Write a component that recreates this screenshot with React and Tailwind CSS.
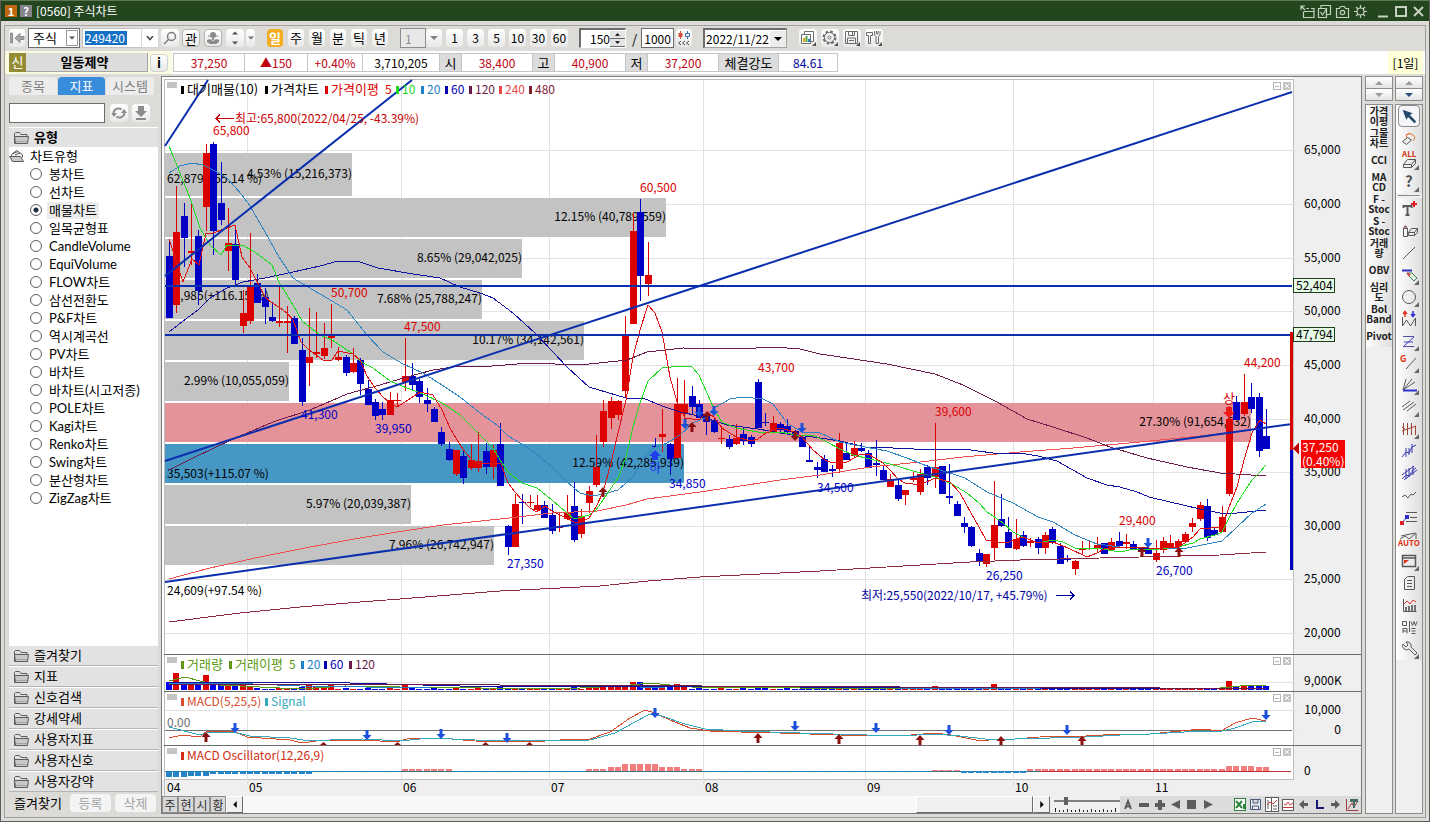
import React, { useState } from 'react';
import clsx from 'clsx';

const RED = '#dc0000';
const BLUE = '#0000c4';

// one row per day: [rising, high, low, body top, body bottom]
const CANDLES = [
    [0, 239, 318, 256, 318], [1, 186, 313, 232, 305], [0, 203, 267, 216, 238], [1, 201, 265, 251, 253], [0, 230, 305, 236, 291],
    [1, 144, 231, 153, 207], [0, 142, 255, 144, 231], [0, 162, 225, 203, 220], [1, 208, 271, 243, 251], [0, 227, 284, 244, 280],
    [1, 290, 333, 313, 326], [1, 233, 324, 286, 321], [0, 274, 303, 283, 303], [0, 288, 324, 297, 307], [0, 302, 322, 317, 321],
    [1, 286, 327, 321, 323], [1, 306, 353, 321, 323], [0, 316, 343, 318, 344], [0, 338, 406, 350, 402], [1, 308, 386, 357, 363],
    [1, 312, 358, 352, 354], [1, 323, 359, 348, 356], [1, 304, 348, 336, 338], [1, 347, 361, 357, 360], [0, 355, 376, 357, 373],
    [1, 348, 373, 363, 372], [0, 358, 395, 360, 384], [0, 380, 405, 389, 405], [0, 399, 420, 402, 416], [0, 402, 420, 409, 415],
    [1, 392, 415, 400, 415], [1, 393, 407, 400, 401], [1, 338, 391, 376, 382], [0, 363, 391, 376, 385], [0, 379, 403, 381, 397],
    [0, 388, 412, 400, 404], [0, 407, 422, 409, 422], [0, 427, 446, 432, 444], [0, 442, 461, 449, 460], [1, 450, 476, 450, 474],
    [0, 449, 484, 456, 478], [1, 444, 470, 460, 468], [1, 432, 472, 461, 468], [0, 443, 474, 451, 467], [1, 445, 479, 450, 467],
    [0, 423, 486, 444, 486], [0, 525, 555, 526, 547], [1, 494, 547, 504, 547], [0, 494, 524, 502, 503], [1, 495, 507, 502, 503],
    [1, 495, 512, 505, 510], [0, 501, 518, 505, 518], [0, 504, 534, 515, 531], [1, 513, 532, 527, 528], [1, 495, 520, 512, 519],
    [0, 482, 542, 506, 540], [1, 509, 538, 516, 534], [1, 486, 513, 491, 503], [1, 435, 487, 467, 485], [1, 400, 447, 411, 442],
    [1, 397, 429, 401, 418], [1, 400, 420, 401, 415], [1, 316, 398, 336, 391], [1, 213, 324, 231, 324], [0, 199, 301, 212, 276],
    [1, 242, 296, 275, 284], [0, 438, 447, 446, 447], [1, 409, 452, 434, 437], [0, 443, 475, 444, 459], [1, 378, 458, 404, 458],
    [1, 380, 420, 404, 414], [0, 386, 415, 396, 407], [0, 400, 418, 404, 418], [0, 412, 435, 414, 422], [0, 418, 433, 420, 432],
    [1, 427, 444, 438, 439], [0, 435, 449, 439, 447], [1, 424, 445, 438, 444], [0, 428, 445, 434, 441], [0, 435, 447, 437, 444],
    [0, 379, 428, 382, 428], [0, 413, 426, 422, 423], [1, 416, 432, 423, 432], [0, 422, 432, 424, 430], [0, 419, 435, 426, 432],
    [0, 430, 440, 431, 437], [0, 435, 447, 437, 447], [0, 446, 462, 460, 462], [0, 462, 478, 467, 470], [0, 455, 472, 459, 472],
    [0, 465, 477, 469, 471], [1, 433, 473, 443, 469], [0, 443, 460, 453, 460], [1, 441, 457, 448, 456], [0, 443, 452, 448, 451],
    [0, 450, 468, 453, 468], [0, 440, 476, 463, 465], [0, 465, 480, 470, 480], [1, 474, 487, 479, 487], [0, 480, 501, 485, 499],
    [1, 490, 505, 490, 495], [1, 472, 482, 478, 480], [1, 469, 495, 474, 492], [0, 465, 485, 467, 478], [1, 423, 488, 467, 477],
    [0, 466, 494, 466, 494], [0, 464, 504, 496, 498], [0, 501, 516, 504, 516], [0, 517, 533, 523, 527], [0, 526, 547, 527, 546],
    [0, 549, 566, 553, 562], [1, 554, 567, 554, 564], [1, 481, 560, 525, 548], [0, 494, 527, 519, 526], [0, 517, 548, 532, 548],
    [1, 519, 550, 539, 549], [0, 531, 547, 535, 546], [1, 538, 547, 541, 543], [0, 537, 554, 539, 548], [1, 532, 554, 535, 548],
    [0, 527, 544, 529, 543], [0, 543, 564, 546, 564], [0, 555, 562, 558, 560], [1, 560, 575, 561, 569], [1, 541, 554, 549, 550],
    [1, 541, 550, 548, 549], [1, 537, 553, 545, 548], [0, 543, 554, 543, 554], [1, 538, 550, 542, 550], [0, 532, 547, 541, 546],
    [1, 534, 549, 542, 544], [0, 541, 550, 544, 549], [0, 547, 557, 548, 552], [0, 546, 554, 548, 554], [1, 540, 562, 553, 560],
    [1, 537, 553, 541, 550], [1, 535, 548, 543, 547], [1, 539, 548, 541, 547], [1, 532, 543, 534, 542], [1, 518, 532, 523, 527],
    [1, 502, 521, 505, 519], [0, 499, 541, 506, 538], [0, 527, 536, 530, 535], [1, 506, 532, 517, 532], [1, 406, 496, 419, 494],
    [0, 396, 420, 402, 420], [1, 374, 416, 402, 414], [0, 383, 413, 397, 409], [0, 393, 457, 397, 451], [0, 409, 449, 436, 449],
];

const dayX = (i) => Math.round(169 + i * 7.362);

// bar heights of the volume pane, days that stand out
const VOLUMES = {
    0: 8, 1: 17, 2: 8, 3: 8, 4: 8, 5: 15, 6: 8, 7: 8, 8: 4, 9: 5, 10: 5, 11: 3, 18: 3, 19: 5, 20: 4, 21: 4, 22: 5, 32: 5,
    45: 3, 55: 3, 58: 4, 59: 5, 60: 4, 61: 3, 62: 5, 63: 8, 64: 8, 65: 5, 66: 4, 67: 5, 68: 3, 69: 6, 70: 5, 80: 4,
    91: 3, 104: 4, 112: 6, 144: 9, 145: 4, 146: 4, 147: 4, 148: 4, 149: 4,
};

const oscillator = (i) => {
    if (i < 6) return -6 + Math.floor(i / 3);
    if (i < 20) return -3;
    if (i < 32) return -1;
    if (i < 39) return 2;
    if (i < 57) return -1;
    if (i < 60) return 2;
    if (i < 62) return 4;
    if (i < 67) return 7;
    if (i < 70) return 4;
    if (i < 73) return 2;
    if (i < 104) return -1;
    if (i < 108) return 1;
    if (i < 117) return -2;
    if (i < 144) return 2;
    return i < 148 ? 5 : 4;
};

const AVERAGES = [
    { color: '#8c2c3c', points: '169,622 240,613 300,607 360,602 400,599 500,591 600,586 648,581 700,577 820,571 970,562 1020,560 1140,557 1220,555 1266,552' },
    { color: '#f05050', points: '169,579 210,568 260,557 310,547 360,538 410,530 443,525 500,519 552,513 597,511 626,505 647,499 700,492 747,485 780,480 820,475 870,467 920,462 963,457 1020,452 1073,448 1140,442 1200,436 1250,430' },
    { color: '#6e1c4c', points: '169,470 193,458 233,439 273,422 310,410 347,394 373,387 407,377 433,370 460,366 480,367 530,363 580,365 627,360 647,352 683,348 740,349 773,347 800,349 820,354 847,358 887,364 935,374 963,385 997,402 1027,419 1053,427 1087,438 1110,447 1147,458 1187,467 1220,473 1266,476' },
    { color: '#1212a0', points: '169,332 187,318 198,310 210,298 227,288 243,282 265,278 293,272 320,266 338,261 360,262 378,268 413,274 440,278 460,287 480,293 493,298 513,313 535,333 553,352 567,367 589,387 626,398 643,398 662,406 680,412 699,416 727,425 758,429 780,433 813,437 840,441 865,447 893,448 935,450 963,449 993,453 1020,453 1038,456 1057,461 1087,478 1107,485 1120,487 1137,492 1149,497 1170,502 1200,509 1220,513 1237,513 1266,510' },
    { color: '#2c84c4', points: '169,173 180,166 192,163 203,165 215,171 227,178 242,195 250,206 265,232 279,257 293,278 313,290 327,298 347,310 367,335 383,352 403,364 423,373 442,385 460,397 480,413 497,425 508,436 530,449 552,467 567,482 580,493 593,496 607,493 618,490 633,477 643,460 653,448 667,443 680,435 693,423 707,417 714,408 730,399 743,397 763,399 773,404 787,423 802,432 820,433 840,442 865,447 887,451 907,458 927,466 953,474 965,478 987,492 1013,503 1038,517 1053,522 1075,535 1097,544 1120,547 1149,548 1187,548 1222,541 1237,527 1252,513 1266,504' },
    { color: '#20dc20', points: '169,146 190,198 200,228 210,245 221,255 227,245 242,245 255,252 272,265 279,282 293,305 302,321 320,335 332,340 353,354 363,363 373,368 390,381 407,388 423,394 442,403 460,415 477,432 493,448 500,460 508,472 522,483 537,488 552,500 567,513 574,519 589,515 596,510 603,500 618,478 626,457 633,427 640,403 648,381 662,368 680,366 692,367 699,375 707,393 714,409 722,422 736,428 758,432 780,432 802,436 813,435 827,442 840,449 853,455 870,459 890,464 913,471 935,477 950,483 957,487 967,493 979,503 987,512 993,516 1003,523 1013,532 1023,537 1038,543 1053,540 1063,542 1075,548 1097,548 1120,552 1134,549 1149,550 1178,547 1193,543 1200,539 1215,535 1222,532 1229,518 1237,503 1252,480 1260,472 1266,465' },
    { color: '#e01010', points: '169,239 183,282 192,259 199,265 206,233 213,233 235,225 242,257 250,268 265,297 272,303 279,307 287,313 293,320 301,342 309,350 323,360 332,360 338,351 353,354 360,360 367,376 375,388 383,397 390,403 397,407 408,400 420,392 433,395 442,410 450,428 457,440 465,452 472,460 478,463 493,463 501,464 508,483 515,492 522,500 530,508 537,512 545,506 552,511 560,515 574,522 581,522 589,518 596,507 603,492 611,463 618,433 626,400 633,357 640,330 648,305 655,313 662,332 670,377 677,402 685,418 699,420 707,412 714,417 722,428 736,437 751,441 758,439 766,433 780,428 795,432 802,437 813,450 825,460 832,463 847,462 861,454 870,455 883,463 890,470 898,479 905,483 920,485 935,478 950,482 960,493 971,513 979,527 986,540 997,542 1009,542 1016,539 1023,537 1038,543 1053,542 1068,548 1087,557 1097,553 1104,549 1119,547 1134,547 1149,548 1163,548 1178,547 1185,543 1193,537 1200,529 1222,527 1229,507 1237,487 1244,460 1252,433 1260,420 1266,424' },
];

const PROFILE = [
    { y: 153, h: 43, to: 352, label: '4.53% (15,216,373)' },
    { y: 198, h: 39, to: 666, label: '12.15% (40,789,559)' },
    { y: 239, h: 39, to: 522, label: '8.65% (29,042,025)' },
    { y: 280, h: 39, to: 482, label: '7.68% (25,788,247)' },
    { y: 321, h: 39, to: 584, label: '10.17% (34,142,561)' },
    { y: 362, h: 39, to: 289, label: '2.99% (10,055,059)' },
    { y: 403, h: 39, to: 1251, label: '27.30% (91,654,632)', fill: '#e4939a' },
    { y: 444, h: 39, to: 684, label: '12.59% (42,285,939)', fill: '#4797c5' },
    { y: 485, h: 39, to: 411, label: '5.97% (20,039,387)' },
    { y: 526, h: 39, to: 494, label: '7.96% (26,742,947)' },
];

const MONTHS = [['04', 165], ['05', 247], ['06', 401], ['07', 549], ['08', 703], ['09', 865], ['10', 1013], ['11', 1153]];
const PRICES = [['65,000', 150], ['60,000', 204], ['55,000', 258], ['50,000', 311], ['45,000', 365], ['40,000', 419], ['35,000', 472], ['30,000', 526], ['25,000', 579], ['20,000', 633]];

const PRICE_TAGS = [
    ['65,800', 213, 135, RED], ['50,700', 331, 297, RED], ['47,500', 404, 331, RED], ['60,500', 640, 192, RED],
    ['43,700', 758, 372, RED], ['39,600', 935, 416, RED], ['29,400', 1119, 525, RED], ['44,200', 1244, 367, RED],
    ['41,300', 301, 419, BLUE], ['39,950', 375, 433, BLUE], ['27,350', 507, 568, BLUE], ['34,850', 669, 488, BLUE],
    ['34,500', 817, 492, BLUE], ['26,250', 986, 580, BLUE], ['26,700', 1156, 575, BLUE],
];

const SIDE_NOTES = [['62,879(+55.14 %)', 183], ['51,985(+116.15 %)', 300], ['35,503(+115.07 %)', 478], ['24,609(+97.54 %)', 595]];

function Legend({ y, items }) {
    return items.map(([text, x, color, marked = true]) => (
        <g key={text + x} fill={color}>
            {marked && <rect x={x - 6} y={y - 8} width="3" height="8" />}
            <text x={x} y={y} fontSize={/[가-힣]/.test(text) ? 13 : 12}>{text}</text>
        </g>
    ));
}

function PaneButtons({ y }) {
    return (
        <g fill="none" stroke="#b4b4b4">
            <rect x="167" y={y} width="10" height="6" fill="#c4c4c4" stroke="none" />
            <rect x="1273.5" y={y + 0.5} width="7" height="7" />
            <path d={`M1275 ${y + 4.5}h4`} />
            <rect x="1283" y={y} width="8" height="8" fill="#c4c4c4" stroke="none" />
            <path d={`M1285 ${y + 2}l4 4m0-4l-4 4`} stroke="#fff" />
        </g>
    );
}

function DownArrow({ x, y, color = '#1c50dc' }) {
    return <path d={`M${x - 1.5} ${y - 5}h3v5h3l-4.500 5l-4.500-5h3z`} fill={color} />;
}

function UpArrow({ x, y, color = '#8c1010' }) {
    return <path d={`M${x - 1.5} ${y + 5}h3v-5h3l-4.500-5l-4.500 5h3z`} fill={color} />;
}

function PricePane() {
    return (
        <g>
            {PROFILE.map((b) => (
                <rect key={b.y} x="165" y={b.y} width={b.to - 165} height={b.h} fill={b.fill || '#c3c3c3'} />
            ))}
            <g fontSize="12" fill="#000">
                {PROFILE.map((b) => <text key={b.y} x={b.to} y={b.y === 153 ? 178 : b.y + 23} textAnchor="end">{b.label}</text>)}
                {SIDE_NOTES.map(([text, y]) => <text key={text} x="167" y={y}>{text}</text>)}
            </g>
            {CANDLES.map(([up, high, low, top, bottom], i) => (
                <g key={i} fill={up ? RED : BLUE}>
                    <rect x={dayX(i)} y={high} width="1" height={low - high} />
                    <rect x={dayX(i) - 3} y={top} width="7" height={Math.max(bottom - top, 1)} />
                </g>
            ))}
            {AVERAGES.map((a) => <polyline key={a.color} points={a.points} fill="none" stroke={a.color} />)}
            <g stroke="#0a2fae" strokeWidth="2" shapeRendering="auto">
                <path d="M165 146L208 80M165 276L412 80M165 286H1292M165 335H1292M165 461L1292 92M165 582L1292 424" />
            </g>
            <g shapeRendering="auto">
                <UpArrow x={603} y={492} />
                <UpArrow x={692} y={427} />
                <UpArrow x={707} y={416} />
                <UpArrow x={1142} y={552} />
                <UpArrow x={1179} y={552} />
                <DownArrow x={685} y={424} />
                <DownArrow x={699} y={412} />
                <DownArrow x={714} y={411} />
                <DownArrow x={802} y={428} />
                <DownArrow x={795} y={436} color="#8c1010" />
                <DownArrow x={1148} y={543} />
                <path d="M655 450l6 6h-3v4h-6v-4h-3z" fill="#2040f0" />
                <path d="M1229 418l6-6h-3v-5h-6v5h-3z" fill="#f01818" />
            </g>
            <text x="649" y="472" fontSize="13" fill="#2040f0">하</text>
            <text x="1223" y="403" fontSize="13" fill={RED}>상</text>
            <g fontSize="12">
                {PRICE_TAGS.map(([text, x, y, color]) => <text key={text} x={x} y={y} fill={color}>{text}</text>)}
            </g>
            <text x="235" y="123" fontSize="12" fill="#c80000">최고:65,800(2022/04/25, -43.39%)</text>
            <path d="M234 118.500h-18m4-4l-4 4l4 4" fill="none" stroke="#c80000" />
            <text x="861" y="600" fontSize="12" fill="#0000a0">최저:25,550(2022/10/17, +45.79%)</text>
            <path d="M1056 595.500h18m-4-4l4 4l-4 4" fill="none" stroke="#0000a0" />
            <Legend
                y={94}
                items={[
                    ['대기매물(10)', 187, '#000'], ['가격차트', 271, '#000'], ['가격이평', 331, RED], ['5', 385, RED, false],
                    ['10', 402, '#20d820'], ['20', 427, '#2080c8'], ['60', 451, '#0000b0'], ['120', 475, '#6a1a48'],
                    ['240', 505, '#e84848'], ['480', 535, '#802030'],
                ]}
            />
            <PaneButtons y={82} />
        </g>
    );
}

function VolumePane() {
    return (
        <g>
            {CANDLES.map(([up], i) => {
                const h = VOLUMES[i] || 1 + ((i * 7) % 3 === 0);
                return <rect key={i} x={dayX(i) - 3} y={690 - h} width="6" height={h} fill={up ? RED : '#0000f0'} />;
            })}
            <g fill="none">
                <path d="M169 681L185 677L200 681L220 685L300 689L345 686L400 687L560 689L620 686L650 683L690 687L800 688L1220 688L1250 685L1266 686" stroke="#5a9a10" />
                <path d="M169 683L230 683L300 686L430 688L640 688L690 686L800 687L1000 689L1266 688" stroke="#2080c8" />
                <path d="M169 682L350 683L460 686L800 687L1040 688L1266 688" stroke="#1010a0" />
                <path d="M169 684L500 685L900 687L1160 688L1266 688" stroke="#6a1a48" />
            </g>
            <Legend
                y={669}
                items={[
                    ['거래량', 187, '#5a9a10'], ['거래이평', 235, '#5a9a10'], ['5', 289, '#5a9a10', false],
                    ['20', 307, '#2080c8'], ['60', 330, '#0000b0'], ['120', 355, '#6a1a48'],
                ]}
            />
            <PaneButtons y={657} />
        </g>
    );
}

function MacdPane() {
    const sells = [[235, 728], [367, 735], [441, 734], [507, 738], [655, 713], [795, 726], [876, 728], [949, 730], [1067, 730], [1266, 715]];
    const buys = [[206, 737], [758, 738], [839, 739], [920, 740], [1001, 741], [1082, 741]];
    return (
        <g>
            <path d="M165 730.500H1292" stroke="#707070" />
            <polyline points="169,738 182,735 200,737 207,731 233,731 247,737 290,740 302,743 323,740 363,740 397,742 410,738 440,738 475,741 530,742 560,740 590,739 610,732 630,718 645,710 655,713 670,720 690,728 710,731 740,732 780,733 840,735 900,736 934,733 951,735 981,741 998,739 1015,739 1052,736 1086,736 1120,734 1150,734 1201,729 1221,731 1235,723 1252,718 1266,721" fill="none" stroke="#d84c2c" />
            <polyline points="169,727 200,735 210,732 233,732 250,736 290,738 310,741 330,740 363,739 400,741 430,738 475,740 530,741 590,740 615,733 635,722 650,714 662,716 685,724 705,729 740,731 800,733 900,736 934,734 960,736 985,739 1015,739 1086,737 1120,735 1150,734 1201,731 1222,731 1235,728 1255,721 1266,721" fill="none" stroke="#34a8bc" />
            <g shapeRendering="auto">
                {sells.map(([x, y]) => <DownArrow key={x} x={x} y={y} />)}
                {buys.map(([x, y]) => <UpArrow key={x} x={x} y={y} />)}
                <path d="M320 745l3.500-3l3.500 3zM394 745l3.500-3l3.500 3zM482 745l3.500-3l3.500 3zM526 745l3.500-3l3.500 3z" fill="#8c1010" />
            </g>
            <Legend y={706} items={[['MACD(5,25,5)', 187, '#d84c2c'], ['Signal', 271, '#34a8bc']]} />
            <text x="167" y="727" fontSize="12" fill="#707070">0.00</text>
            <PaneButtons y={694} />
        </g>
    );
}

function OscillatorPane() {
    return (
        <g>
            <path d="M165 771.500H1266" stroke="#3c7484" />
            <path d="M1040 771.500H1291" stroke="#c03030" />
            {CANDLES.map((_, i) => {
                const v = oscillator(i);
                return (
                    <rect key={i} x={dayX(i) - 3} y={v > 0 ? 771 - v : 771} width="6" height={Math.abs(v)} fill={v > 0 ? '#f47c7c' : '#2484c8'} />
                );
            })}
            <Legend y={760} items={[['MACD Oscillator(12,26,9)', 187, '#d02c10']]} />
            <PaneButtons y={748} />
        </g>
    );
}

function Axis() {
    return (
        <g fontSize="12" fill="#000">
            {PRICES.map(([text, y]) => <text key={text} x="1304" y={y + 4}>{text}</text>)}
            {MONTHS.map(([text, x]) => <text key={text} x={x + 2} y="792">{text}</text>)}
            <text x="1304" y="685">9,000K</text>
            <text x="1341" y="714" textAnchor="end">10,000</text>
            <text x="1341" y="734" textAnchor="end">0</text>
            <text x="1304" y="775">0</text>
            {[['52,404', 286], ['47,794', 335]].map(([text, y]) => (
                <g key={text}>
                    <rect x="1293.500" y={y - 7.5} width="41" height="14" fill="#e6fae6" stroke="#1c3c1c" />
                    <text x="1296" y={y + 4}>{text}</text>
                </g>
            ))}
            <rect x="1290" y="332" width="3" height="118" fill={RED} />
            <rect x="1290" y="450" width="3" height="120" fill={BLUE} />
            <path d="M1299 443v11l-6-5.500z" fill="#c00000" />
            <rect x="1301" y="440" width="44" height="28" fill="#f80000" />
            <text x="1302" y="452" fill="#fff">37,250</text>
            <text x="1302" y="466" fill="#fff">(0.40%)</text>
        </g>
    );
}

function StockChart() {
    return (
        <svg viewBox="162 77 1199 719" className="block h-auto w-full" shapeRendering="crispEdges" role="img" aria-label="일동제약 주식차트">
            <rect x="162" y="77" width="1199" height="719" fill="#efefef" />
            <rect x="162" y="77" width="1131" height="703" fill="#fff" />
            <path d="M164.500 796V79.500H1293.500V779.500H164.500" fill="none" stroke="#bcbcbc" />
            <g stroke="#e2e2e2">
                {PRICES.map(([text, y]) => <path key={text} d={`M165 ${y}.500H1297`} />)}
                {MONTHS.slice(1).map(([text, x]) => <path key={text} d={`M${x}.500 80V786`} />)}
                <path d="M165 682.500H1297M165 710.500H1297M1293 730.500h4M1293 771.500h4" />
            </g>
            <PricePane />
            <VolumePane />
            <MacdPane />
            <OscillatorPane />
            <path d="M164 654.500H1361M164 691.500H1361M164 745.500H1361" stroke="#6c6c6c" />
            <Axis />
        </svg>
    );
}

function TitleBar() {
    return (
        <header className="flex h-[21px] items-center border-t border-[#5c7854] bg-[#24461e] px-1 text-[13px] text-white">
            <span className="h-3 w-3 bg-[#c06810] text-center text-[11px] leading-3 font-bold">1</span>
            <span className="ml-[3px] h-3 w-3 bg-[#84848c] text-center text-[11px] leading-3 font-bold">?</span>
            <h1 className="ml-1 flex-1 text-[12px]">[0560] 주식차트</h1>
            <svg viewBox="0 0 126 16" className="h-4 w-[126px]" fill="none" stroke="#c4d0c0" strokeWidth="1.200">
                <path d="M2 7V3h4M2 3l4 4M8 5.500h2M12 5.500h3v9H4.500V9M4.500 14.500v-6M8 5v1M5 8.500h10" />
                <path d="M19.500 5.500h8v9h-8zM22 5V2.500h9.500v9H28M21.500 9l2 3l4-6" />
                <path d="M37.500 5.500h3l1-2h4l1 2h3v9h-12z" />
                <circle cx="43.500" cy="9.500" r="2.200" />
                <circle cx="61.500" cy="8.500" r="3.500" />
                <path d="M61.500 2v3M61.500 12v3M55 8.500h3M65 8.500h3M57 4l2 2M66 4l-2 2M57 13l2-2M66 13l-2-2" />
                <path d="M79 13.500h10" strokeWidth="2" />
                <path d="M97 4h10v9H97z" strokeWidth="2" />
                <path d="M115 4l9 9m0-9l-9 9" strokeWidth="2" />
            </svg>
        </header>
    );
}

function ToolButton({ children, label, className }) {
    return (
        <button
            type="button"
            aria-label={label}
            className={clsx('flex h-[18px] shrink-0 items-center justify-center rounded-sm bg-gradient-to-b from-white to-[#e8e8e8]', className)}
        >
            {children}
        </button>
    );
}

function Triangle({ down, className }) {
    return (
        <svg viewBox="0 0 8 4" className={clsx('h-1 w-2', className)} fill="currentColor">
            <path d={down ? 'M0 0h8l-4 4z' : 'M0 4h8l-4-4z'} />
        </svg>
    );
}

function Toolbar() {
    const [period, setPeriod] = useState('일');
    return (
        <div className="flex h-[25px] items-center pb-px pl-1 text-[13px] text-black">
            <ToolButton label="처음" className="w-4">
                <svg viewBox="0 0 16 16" className="h-4 w-4" fill="#a4a4a4" stroke="#8c8c8c">
                    <path d="M1.500 3v10h2V3zM15 6.500h-4V3.500l-5 4.500l5 4.500v-3h4z" />
                </svg>
            </ToolButton>
            <div className="relative ml-[3px] w-[52px]">
                <select aria-label="종목구분" defaultValue="주식" className="h-5 w-full appearance-none border border-[#6c6c6c] bg-white pl-1 leading-4 outline-none">
                    <option>주식</option>
                </select>
                <span className="pointer-events-none absolute top-[2px] right-[2px] flex h-4 w-3 items-center justify-center border border-[#9c9c9c] text-[#505050]"><Triangle down className="w-[6px]" /></span>
            </div>
            <div className="ml-[2px] flex h-5 w-[59px] items-center border border-r-0 border-[#c4c4c4] bg-white pl-[2px]">
                <input aria-label="종목코드" defaultValue="249420" className="h-[14px] w-[42px] bg-[#1470c4] text-[12px] leading-[14px] text-white outline-none" />
            </div>
            <button type="button" aria-label="종목목록" className="flex h-5 w-[18px] items-center justify-center border border-[#d4d4d4] bg-white">
                <svg viewBox="0 0 8 5" className="h-[5px] w-2" fill="none" stroke="#484848" strokeWidth="1.500"><path d="M1 0l3 3.500l3-3.500" /></svg>
            </button>
            <ToolButton label="검색" className="ml-[2px] w-[18px]">
                <svg viewBox="0 0 14 14" className="h-[14px] w-[14px]" fill="none" stroke="#7c7c7c" strokeWidth="1.500"><circle cx="8.500" cy="5.500" r="4" /><path d="M5.500 8.500L1 13" /></svg>
            </ToolButton>
            <ToolButton className="ml-[3px] w-[18px] border border-[#b4b4b4]">관</ToolButton>
            <ToolButton label="투자자" className="ml-1 w-[18px] border border-[#b4b4b4]">
                <svg viewBox="0 0 14 14" className="h-[14px] w-[14px]" fill="#8c8c8c">
                    <circle cx="7" cy="4" r="3" />
                    <path d="M2 4.500h10v1H2zM6 7h2v2H6zM1 9l3-1l3 2l3-2l3 1v2l-3 2H4l-3-2z" />
                </svg>
            </ToolButton>
            <ToolButton label="이동" className="ml-1 w-[18px] flex-col gap-[6px] text-[#505050]">
                <Triangle className="w-[6px]" /><Triangle down className="w-[6px]" />
            </ToolButton>
            <ToolButton label="이동 목록" className="ml-[2px] w-[9px] text-[#707070]"><Triangle down className="w-[6px]" /></ToolButton>
            <div className="ml-3 flex gap-[5px]">
                {['일', '주', '월', '분', '틱', '년'].map((p) => (
                    <button
                        key={p}
                        type="button"
                        onClick={() => setPeriod(p)}
                        className={clsx('h-[18px] w-4 rounded-sm leading-[18px]', p === period ? 'bg-[#f4ac20] font-bold text-white' : 'bg-gradient-to-b from-white to-[#e8e8e8]')}
                    >
                        {p}
                    </button>
                ))}
            </div>
            <input aria-label="분 단위" defaultValue="1" disabled className="ml-3 h-5 w-[26px] border border-[#8c8c8c] bg-[#e8e8e8] pl-1 text-[12px] text-[#8c8c8c]" />
            <ToolButton label="분 단위 목록" className="w-4 text-[#808080]"><Triangle down /></ToolButton>
            <div className="ml-1 flex gap-1 text-[12px]">
                {['1', '3', '5', '10', '30', '60'].map((n) => <ToolButton key={n} className="w-[17px]">{n}</ToolButton>)}
            </div>
            <div className="ml-[11px] flex h-5 items-center border-2 border-r border-b border-[#6c6c6c] border-r-white border-b-white bg-white">
                <input aria-label="표시 봉수" defaultValue="150" className="w-[29px] text-right text-[12px] outline-none" />
                <span className="flex w-[15px] flex-col text-black">
                    <button type="button" aria-label="늘림" className="flex h-2 items-center justify-center border-b border-[#6c6c6c] bg-[#e4e4e4]"><Triangle className="h-[3px] w-[5px]" /></button>
                    <button type="button" aria-label="줄임" className="flex h-2 items-center justify-center border-b border-[#6c6c6c] bg-[#e4e4e4]"><Triangle down className="h-[3px] w-[5px]" /></button>
                </span>
            </div>
            <span className="ml-[6px]">/</span>
            <input aria-label="전체 봉수" defaultValue="1000" className="ml-1 h-5 w-[33px] border border-[#6c6c6c] bg-white text-center text-[12px]" />
            <ToolButton label="봉 조회" className="ml-[2px] w-4">
                <svg viewBox="0 0 16 16" className="h-4 w-4" fill="none" stroke="#3c6cb4">
                    <path d="M4.500 1v8" stroke="#d84c3c" /><path d="M2.500 3h4v4h-4z" fill="#d84c3c" stroke="none" />
                    <path d="M11.500 1v2M11.500 7v2M9.500 3.500h4v3h-4z" />
                    <path d="M5 11l-2.500 2l2.500 2M9 11l-2.500 2L9 15M13 11l-2.500 2l2.500 2" stroke="#484848" />
                </svg>
            </ToolButton>
            <div className="ml-[11px] flex h-5 w-[84px] items-center border-2 border-r border-b border-[#6c6c6c] border-r-[#a4a4a4] border-b-[#a4a4a4] bg-white">
                <input aria-label="일자" defaultValue="2022/11/22" className="w-0 flex-1 pl-px text-[12px] outline-none" />
                <button type="button" aria-label="달력" className="flex h-4 w-4 items-center justify-center bg-[#ececec] text-black"><Triangle down /></button>
            </div>
            <div className="ml-3 flex gap-1">
                <ToolButton label="차트 추가" className="w-[18px]">
                    <svg viewBox="0 0 18 18" className="h-[18px] w-[18px]" fill="none" stroke="#6c6c6c"><path d="M5.500 5V2.500h9v10H12M2.500 5.500h9v9h-9z" fill="#fff" /><path d="M5 13V9" stroke="#e4a410" strokeWidth="2" /><path d="M7.500 13V7" stroke="#4ca444" strokeWidth="2" /><path d="M10 13v-3" stroke="#2c7cc4" strokeWidth="2" /><path d="M17 13v4h-4z" fill="#505050" stroke="none" /></svg>
                </ToolButton>
                <ToolButton label="설정" className="w-[18px]">
                    <svg viewBox="0 0 18 18" className="h-[18px] w-[18px]" fill="none" stroke="#6c6c6c"><circle cx="8.500" cy="8.500" r="6" strokeWidth="2" strokeDasharray="2.700 2" /><circle cx="8.500" cy="8.500" r="5" /><circle cx="8.500" cy="8.500" r="1.500" /><path d="M17 13v4h-4z" fill="#505050" stroke="none" /></svg>
                </ToolButton>
                <ToolButton label="저장" className="w-[18px]">
                    <svg viewBox="0 0 18 18" className="h-[18px] w-[18px]" fill="none" stroke="#6c6c6c"><path d="M2.500 2.500h12v12h-12zM5.500 2.500v4h6v-4M9.500 3v3M4.500 14v-5h8v5M6 11.500h5" /><path d="M17 13v4h-4z" fill="#505050" stroke="none" /></svg>
                </ToolButton>
                <ToolButton label="도구" className="w-[18px]">
                    <svg viewBox="0 0 18 18" className="h-[18px] w-[18px]" fill="none" stroke="#6c6c6c"><path d="M1.500 3.500h6v3h-2v8h-2v-8h-2zM9.500 2v4l1.500 1.500v7h2.500v-7L15 6V2M11.500 2v3h1.500V2" /><path d="M17 13v4h-4z" fill="#505050" stroke="none" /></svg>
                </ToolButton>
            </div>
        </div>
    );
}

function QuoteBar() {
    const cell = 'border-r border-[#c4c4c4] p-0 text-center font-normal';
    return (
        <div className="flex h-[23px] items-center bg-white pr-[2px]">
            <div className="flex h-full items-center bg-[#fbfbe4] pr-1 pl-1">
                <div className="flex h-[19px] w-[139px] text-[13px]">
                    <span className="w-[17px] bg-[#948c34] text-center leading-[18px] text-white">신</span>
                    <button type="button" className="flex-1 border-r border-b border-[#a4a4a4] bg-[#dcdcdc] pr-1 font-bold leading-[18px]">일동제약</button>
                </div>
                <ToolButton label="종목정보" className="ml-[2px] w-[18px] border border-[#d0d0d0] text-[13px] font-bold">i</ToolButton>
            </div>
            <table className="ml-px h-[19px] table-fixed border-collapse border border-[#c4c4c4] text-[12px]">
                <tbody>
                    <tr>
                        <td className={clsx(cell, 'w-[71px] text-[#c00010]')}>37,250</td>
                        <td className={clsx(cell, 'w-[63px] text-[#c00010]')}>▲150</td>
                        <td className={clsx(cell, 'w-[55px] text-[#c00010]')}>+0.40%</td>
                        <td className={clsx(cell, 'w-[77px]')}>3,710,205</td>
                        <th className={clsx(cell, 'w-[22px] bg-[#dcdcdc] text-[13px]')}>시</th>
                        <td className={clsx(cell, 'w-[71px] text-[#c00010]')}>38,400</td>
                        <th className={clsx(cell, 'w-[22px] bg-[#dcdcdc] text-[13px]')}>고</th>
                        <td className={clsx(cell, 'w-[71px] text-[#c00010]')}>40,900</td>
                        <th className={clsx(cell, 'w-[22px] bg-[#dcdcdc] text-[13px]')}>저</th>
                        <td className={clsx(cell, 'w-[71px] text-[#c00010]')}>37,200</td>
                        <th className={clsx(cell, 'w-[60px] bg-[#dcdcdc] text-[13px]')}>체결강도</th>
                        <td className={clsx(cell, 'w-[59px] text-[#0000a0]')}>84.61</td>
                    </tr>
                </tbody>
            </table>
            <span className="ml-auto flex h-full w-[35px] items-center justify-center bg-[#ffffd8] text-[12px]">[1일]</span>
        </div>
    );
}

function FolderIcon({ open }) {
    return (
        <svg viewBox="0 0 16 14" className="h-[14px] w-4 shrink-0" stroke="#5c5c5c" fill="#c8c8c8">
            {open ? (
                <>
                    <path d="M2.500 11.500v-6l5-4l6 4v3" fill="#f0f0f0" />
                    <path d="M4 4.500l5-2M6 6l5-2" fill="none" />
                    <path d="M0.500 7.500h11l3 5h-11z" />
                </>
            ) : (
                <>
                    <path d="M1.500 12.500v-10l1-1h4l1.500 2h6v9z" fill="#e0e0e0" />
                    <path d="M2.500 12.500l-1-7h14l-1 7z" />
                    <path d="M3 10.500h11" stroke="#a4a4a4" />
                </>
            )}
        </svg>
    );
}

const CHART_TYPES = [
    '봉차트', '선차트', '매물차트', '일목균형표', 'CandleVolume', 'EquiVolume', 'FLOW차트', '삼선전환도', 'P&F차트', '역시계곡선',
    'PV차트', '바차트', '바차트(시고저종)', 'POLE차트', 'Kagi차트', 'Renko차트', 'Swing차트', '분산형차트', 'ZigZag차트',
];
const FOLDERS = ['즐겨찾기', '지표', '신호검색', '강세약세', '사용자지표', '사용자신호', '사용자강약'];

function Sidebar() {
    const [chartType, setChartType] = useState('매물차트');
    return (
        <aside className="flex w-[149px] shrink-0 flex-col font-['Lato','Noto_Sans_CJK_KR',sans-serif] text-[13px] text-black">
            <nav className="mt-px flex h-[18px] gap-px text-[#808080]">
                <button type="button" className="w-12 rounded-t-sm bg-[#ececec] leading-[18px]">종목</button>
                <button type="button" className="w-[47px] rounded-t-sm bg-[#388cdc] leading-[18px] text-white">지표</button>
                <button type="button" className="w-12 rounded-t-sm bg-[#ececec] leading-[18px]">시스템</button>
            </nav>
            <div className="mt-2 flex items-center">
                <input aria-label="지표 찾기" className="h-5 w-24 border border-[#6c6c6c] bg-white px-1 outline-none" />
                <ToolButton label="새로고침" className="ml-[5px] w-[18px]">
                    <svg viewBox="0 0 16 16" className="h-4 w-4" fill="none" stroke="#8c8c8c" strokeWidth="2"><path d="M2.500 8a5 5 0 0 1 8-3.500M13.500 8a5 5 0 0 1-8 3.500" /><path d="M10 8h6l-3-4zM6 8H0l3 4z" fill="#8c8c8c" stroke="none" /></svg>
                </ToolButton>
                <ToolButton label="내려받기" className="ml-1 w-[18px]">
                    <svg viewBox="0 0 16 16" className="h-4 w-4" fill="#8c8c8c"><path d="M5 1h6v5h3l-6 6l-6-6h3zM3 13h10v2H3z" /></svg>
                </ToolButton>
            </div>
            <h2 className="mt-1 flex h-5 items-center gap-[5px] border-t border-white bg-[#e2e2e2] pl-1 font-bold">
                <FolderIcon />유형
            </h2>
            <div className="flex-1 bg-white">
                <div className="flex h-[18px] items-center gap-[5px]"><FolderIcon open />차트유형</div>
                {CHART_TYPES.map((name) => (
                    <label key={name} className="flex h-[18px] items-center pl-[21px]">
                        <input
                            type="radio"
                            name="chartType"
                            checked={chartType === name}
                            onChange={() => setChartType(name)}
                            className="h-3 w-3 shrink-0 appearance-none rounded-full border border-[#5c5c5c] bg-white checked:bg-[radial-gradient(#203040_2px,#fff_3px)]"
                        />
                        <span className={clsx('ml-[5px] px-[2px] leading-[17px] whitespace-nowrap', chartType === name && 'bg-[#ececec]')}>{name}</span>
                    </label>
                ))}
            </div>
            {FOLDERS.map((name) => (
                <button key={name} type="button" className="flex h-[21px] items-center gap-[5px] border-t border-b border-t-white border-b-[#b4b4b4] bg-[#e2e2e2] pl-1">
                    <FolderIcon />{name}
                </button>
            ))}
            <div className="flex h-[22px] items-center">
                <span className="pl-[5px]">즐겨찾기</span>
                <button type="button" className="ml-auto h-[18px] w-[41px] rounded-sm bg-[#f4f4f4] leading-[18px] text-[#a4a4a4]">등록</button>
                <button type="button" className="mr-[2px] ml-1 h-[18px] w-[41px] rounded-sm bg-[#f4f4f4] leading-[18px] text-[#a4a4a4]">삭제</button>
            </div>
        </aside>
    );
}

function BottomBar() {
    const gray = '#5c5c5c';
    return (
        <div className="flex h-[17px] bg-[#f0f0f0] text-[12px]">
            {['주', '현', '시', '황'].map((t) => (
                <button key={t} type="button" className="w-4 border border-[#8c8c8c] bg-[#d8d8d8] leading-[14px] text-[#303030]">{t}</button>
            ))}
            <button type="button" aria-label="왼쪽" className="flex w-[17px] items-center justify-center border border-r-[#6c6c6c] border-b-[#6c6c6c] border-t-white border-l-white">
                <svg viewBox="0 0 4 8" className="h-[7px] w-[4px]"><path d="M4 0v8L0 4z" /></svg>
            </button>
            <div className="flex flex-1 justify-end bg-[#f8f8f8]">
                <button type="button" aria-label="스크롤" className="w-[117px] border border-r-[#6c6c6c] border-b-[#6c6c6c] border-t-white border-l-white bg-[#f0f0f0]" />
            </div>
            <button type="button" aria-label="오른쪽" className="flex w-[17px] items-center justify-center border border-r-[#6c6c6c] border-b-[#6c6c6c] border-t-white border-l-white">
                <svg viewBox="0 0 4 8" className="h-[7px] w-[4px]"><path d="M0 0v8l4-4z" /></svg>
            </button>
            <div className="ml-1 flex w-[66px] flex-col justify-between pt-[1px]">
                <input type="range" aria-label="확대" defaultValue="16" className="h-2 w-full appearance-none bg-[linear-gradient(#808080,#808080)] bg-[length:100%_2px] bg-center bg-no-repeat [&::-webkit-slider-thumb]:h-2 [&::-webkit-slider-thumb]:w-1 [&::-webkit-slider-thumb]:appearance-none [&::-webkit-slider-thumb]:bg-[#606060]" />
                <svg viewBox="0 0 66 5" className="h-[5px] w-full" stroke="#202020" shapeRendering="crispEdges">
                    <path d="M1.500 0v4M5.500 2v2M9.500 2v2M13.500 1v3M17.500 2v2M21.500 2v2M25.500 1v3M29.500 2v2M33.500 2v2M37.500 1v3M41.500 2v2M45.500 2v2M49.500 1v3M53.500 2v2M57.500 2v2M61.500 0v4" />
                </svg>
            </div>
            <svg viewBox="1120 796 241 17" className="h-[17px] w-[241px]" fill={gray}>
                <rect x="1120" y="796" width="241" height="17" fill="#dcdcdc" />
                <path d="M1125 809l3-8l3 8M1126 806.500h4" fill="none" stroke={gray} strokeWidth="2" />
                <path d="M1139 803h10v4h-10zM1155 803h3v-3h4v3h3v4h-3v3h-4v-3h-3zM1180 800v9l-9-4.500zM1187 800h9v9h-9zM1204 800v9l9-4.500z" />
                <rect x="1234.500" y="798.500" width="11" height="12" fill="#fff" stroke="#2c843c" />
                <path d="M1236 801l6 7M1242 801l-6 7" stroke="#2c843c" strokeWidth="2" />
                <path d="M1243 804h2v5h-2" fill="#2c843c" />
                <path d="M1250.500 799.500h10v10h-10zM1253 800v3h5v-3M1252.500 810v-4h6v4" fill="#e8ecf4" stroke="#485878" />
                <rect x="1265.500" y="797.500" width="13" height="14" fill="#fff" stroke="#5c5c5c" />
                <path d="M1268 800v9M1271.500 798v13M1273 806h4M1273 809h4" stroke="#5c5c5c" />
                <path d="M1267 805l3-3l3 2l4-4" fill="none" stroke="#c83c3c" />
                <rect x="1282.500" y="799.500" width="11" height="11" fill="#fff" stroke="#5c5c5c" />
                <path d="M1284 804l2 1l2-3l2 3l3-2M1283 807.500h10" fill="none" stroke="#c83c3c" />
                <path d="M1299 804.500l5-4.500v3h4v3h-4v3z" />
                <path d="M1317 800v8h7" fill="none" stroke="#181878" strokeWidth="2" />
                <path d="M1340 804.500l-5-4.500v3h-4v3h4v3z" />
                <path d="M1346.500 799v11.500h12M1348 809l4-6l2 4l4-6" fill="none" stroke="#a03c3c" />
                <path d="M1350 799h8v3h-3v6h-2v-6h-3z" fill="#486c64" />
            </svg>
        </div>
    );
}

function SpinPair({ active }) {
    return (
        <div className="mb-[3px] flex flex-col">
            <button type="button" aria-label="위로" className="flex h-[13px] items-center justify-center border border-[#8c8c8c] bg-gradient-to-b from-white to-[#e4e4e4] text-[#9c9c9c]"><Triangle /></button>
            <button type="button" aria-label="아래로" className={clsx('flex h-3 items-center justify-center border border-t-0 border-[#8c8c8c] bg-gradient-to-b from-white to-[#e4e4e4]', active ? 'text-[#305080]' : 'text-[#9c9c9c]')}><Triangle down /></button>
        </div>
    );
}

const INDICATORS = [['가격', '이평'], ['그물', '차트'], ['CCI'], ['MA', 'CD'], ['F -', 'Stoc'], ['S -', 'Stoc'], ['거래', '량'], ['OBV'], ['심리', '도'], ['Bol', 'Band'], ['Pivot']];

function IndicatorStrip() {
    return (
        <div className="flex w-7 shrink-0 flex-col">
            <SpinPair />
            <div className="flex flex-1 flex-col border border-[#8c8c8c] bg-[#efefef]">
                {INDICATORS.map((lines) => (
                    <button key={lines.join('')} type="button" className="flex h-[22px] w-full flex-col items-center justify-center bg-gradient-to-r from-white to-[#dedede] pb-px text-[10px] leading-[10px] font-bold text-[#202020]">
                        {lines.map((l) => <span key={l} className="whitespace-nowrap">{l}</span>)}
                    </button>
                ))}
            </div>
        </div>
    );
}

const MENU = <path d="M21 16v5h-5z" fill="#686868" stroke="none" />;

const TOOLS = [
    ['선택', <path d="M4 4l11 4l-3 2l7 7l-2 2l-7-7l-2 3z" fill="#24486c" stroke="none" />],
    ['되돌리기', <><path d="M8 8a5 4 0 1 1 7 6M8 8l4-2M8 8l1 3" stroke="#e07030" fill="none" /><path d="M4.500 14.500l5-4l4 2.500l-5 4.500z" fill="#eee" /></>],
    ['전체 지우기', <><path d="M5.500 15.500l4-5h8l-4 5zM5.500 15.500v3h8v-3M13.500 18.500l4-4v-4" />{MENU}<text x="4" y="8" fontSize="8" fontWeight="bold" fill="#d03010" stroke="none">ALL</text></>],
    ['도움말', <><text x="7" y="16" fontSize="15" fontWeight="bold" fill="#505050" stroke="none">?</text>{MENU}</>],
    ['글자', <><path d="M5 8h9M9.500 8v9M7.500 17h4M5.500 7v3M13.500 7v3" strokeWidth="2" /><path d="M13 6h6M16 3v6" stroke="#e02020" strokeWidth="2" /></>],
    ['그리기 지우기', <><path d="M5.500 8.500h4v8h-4zM5.500 8.500l2-3l2 3" /><path d="M7 6v2" stroke="#c03030" /><path d="M10.500 12.500l3-4h6l-3 4zM10.500 12.500v3h6v-3M16.500 15.500l3-3v-4" /></>],
    ['추세선', <path d="M5 17L17 5" />],
    ['색연필', <><path d="M4 6.500h10" stroke="#3030c0" strokeWidth="2" /><path d="M9 9l2 3l5 5l3-3l-5-5z" fill="#e0f0e0" stroke="#408050" /><path d="M9 9l3 1l-1 2z" fill="#e04040" stroke="#e04040" />{MENU}</>],
    ['원', <><circle cx="11" cy="11" r="6.500" />{MENU}</>],
    ['패턴', <><path d="M4.500 9v9l4-6l4 6l5-8v8" /><path d="M7 9V4M5 6l2-2.500L9 6" stroke="#e03020" strokeWidth="1.500" /><path d="M15 3v6M13 6l2 2.500L17 6" stroke="#3030d0" strokeWidth="1.500" /></>],
    ['지그재그', <><path d="M5 6.500h11M5 16.500h11" stroke="#5050a0" /><path d="M16 7L6 16M6 12h9" stroke="#4040c0" />{MENU}</>],
    ['갠', <><path d="M8 17L18 6" /><text x="2" y="10" fontSize="9" fontWeight="bold" fill="#e03010" stroke="none">G</text>{MENU}</>],
    ['팬', <><path d="M5 16L17 8M5 16L14 5M5 16L8 5" /><path d="M5 16.500h14" stroke="#3030d0" strokeWidth="2" />{MENU}</>],
    ['채널', <><path d="M4 11l8-6M5 14l11-8M9 15l9-7" />{MENU}</>],
    ['시간대', <><path d="M5.500 5v12M9.500 5v12M13.500 5v12M17.500 8v9M4 13l14-5M4 9l3 2" stroke="#a04838" />{MENU}</>],
    ['회귀선', <path d="M4 17l4-5l3 1l3-6l4-2M8 8v9M11 8v7M14 4v9" stroke="#3838b0" />],
    ['회귀채널', <path d="M4 13L16 4M6 18L19 8M8 7v10M11 6v9M15 4v9M4 17l4-4l3 1l4-6l3-2" stroke="#3838b0" />],
    ['자유선', <path d="M4 13l3-2l3 3l3-4l2 1l3-3" />],
    ['수평선', <><path d="M8 6.500h11M12 11.500h7M8 15.500h11" /><path d="M4 17l5-6" stroke="#3030d0" /><path d="M7 9h4v4H7z" fill="#3030d0" stroke="none" /><path d="M2 15h4v4H2z" fill="#e02020" stroke="none" /></>],
    ['자동추세', <><path d="M2 11l5-3l4 3l7-6v6M3 8l14-3" /><text x="0" y="18" fontSize="8" fontWeight="bold" fill="#e03010" stroke="none">AUTO</text></>],
    ['창', <><path d="M4.500 5.500h13v11h-13zM4.500 8h13" strokeWidth="1.500" /><path d="M6 10h5l-5 4z" fill="#e03010" stroke="none" />{MENU}</>],
    ['문서', <path d="M6.500 7.500l3-3h7v13h-10zM9 8.500h5M9 11.500h5M9 14.500h5" />],
    ['통계', <><path d="M5.500 5v12.500h13" /><path d="M8 17v-4M11 17v-5M14 17v-6M17 17v-6" stroke="#707070" strokeWidth="2" /><path d="M6 10l3-3l3 3l3-4l3 2" stroke="#e03020" /></>],
    ['표시', <path d="M4.500 5.500h4v4h-4zM11.500 5v11M13 5.500l1.500 4l1.500-4l1.500 4l1.500-4M5 12.500h4v5M5 15h4M13.500 12.500h4M13.500 15h4M13.500 17.500h4M5 12v5" />],
    ['환경설정', <><path d="M5 6a4 4 0 0 0 6 5l6 6l2-2l-6-6a4 4 0 0 0-5-5l2 3l-2 2z" fill="#eee" />{MENU}</>],
];

function DrawingStrip() {
    return (
        <div className="flex w-7 shrink-0 flex-col">
            <SpinPair active />
            <div className="flex flex-1 flex-col border border-[#8c8c8c] bg-[#efefef]">
                {TOOLS.map(([label, drawing], i) => (
                    <React.Fragment key={label}>
                        {i === 4 && <div className="mx-[2px] my-[2px] h-px bg-[#8c8c8c]" />}
                        <button type="button" aria-label={label} className="flex h-[22px] w-full justify-center bg-gradient-to-r from-white to-[#dedede]">
                            <svg viewBox="0 0 22 22" className={clsx('h-[22px] w-[22px]', i === 0 && 'rounded-sm border border-[#8c8c8c] bg-[#f4f6fa]')} fill="none" stroke="#585858">
                                {drawing}
                            </svg>
                        </button>
                    </React.Fragment>
                ))}
            </div>
        </div>
    );
}

function App() {
    return (
        <div className="flex min-h-screen flex-col border border-[#5c5c5c] border-t-0 bg-[#dcdbd7] font-['Noto_Sans_CJK_KR','Liberation_Sans',sans-serif] leading-none text-black">
            <TitleBar />
            <div className="m-[3px] mt-1 flex flex-1 flex-col border border-[#a4a0a0]">
                <Toolbar />
                <QuoteBar />
                <main className="flex flex-1 pt-[2px] pr-[2px] pb-[3px] pl-1">
                    <Sidebar />
                    <section className="mr-[3px] ml-[3px] flex min-w-0 flex-1 flex-col self-start border border-[#7c7c7c] bg-[#efefef]">
                        <StockChart />
                        <BottomBar />
                    </section>
                    <IndicatorStrip />
                    <div className="w-[2px]" />
                    <DrawingStrip />
                </main>
            </div>
        </div>
    );
}

export default App;
